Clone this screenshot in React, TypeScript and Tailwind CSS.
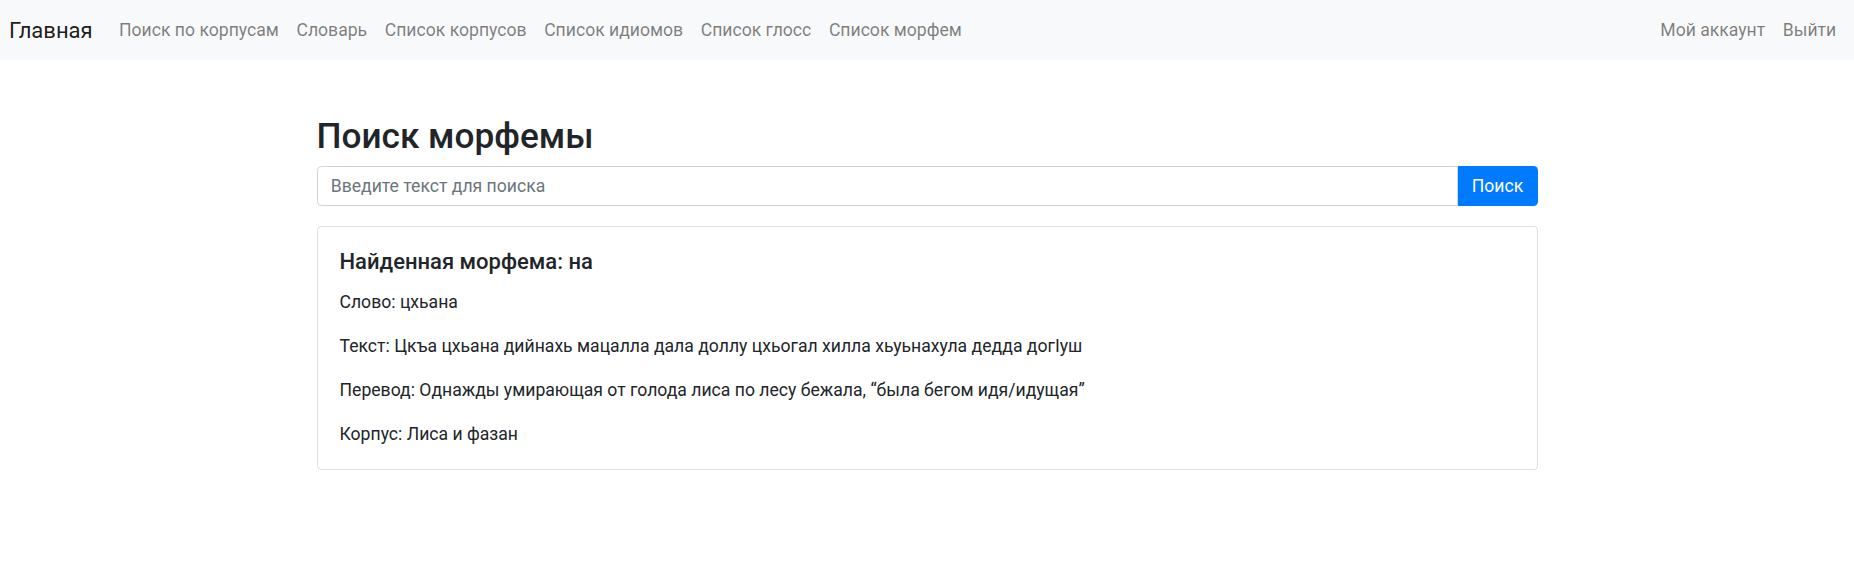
import React, { useState } from 'react';

const links = [
  'Поиск по корпусам',
  'Словарь',
  'Список корпусов',
  'Список идиомов',
  'Список глосс',
  'Список морфем',
];

const result = {
  morpheme: 'на',
  word: 'цхьана',
  text: 'Цкъа цхьана дийнахь мацалла дала доллу цхьогал хилла хьуьнахула дедда догIуш',
  translation: 'Однажды умирающая от голода лиса по лесу бежала, “была бегом идя/идущая”',
  corpus: 'Лиса и фазан',
};

const App = () => {
  const [query, setQuery] = useState('');

  return (
    <div
      className="min-h-screen bg-white text-[#212529] text-[17.6px] leading-[1.5]"
      style={{ fontFamily: 'Roboto, "Liberation Sans", Arial, sans-serif' }}
    >
      <nav className="h-[60px] bg-[#f8f9fa] px-[9px] flex items-center">
        <a href="#" className="text-[22px] leading-[1.5] text-black/90 mr-[17.6px]">
          Главная
        </a>
        <ul className="flex items-center">
          {links.map((link) => (
            <li key={link}>
              <a href="#" className="block px-[8.8px] py-[8.8px] text-black/50 hover:text-black/70">
                {link}
              </a>
            </li>
          ))}
        </ul>
        <ul className="flex items-center ml-auto">
          <li>
            <a href="#" className="block px-[8.8px] py-[8.8px] text-black/50 hover:text-black/70">
              Мой аккаунт
            </a>
          </li>
          <li>
            <a href="#" className="block px-[8.8px] py-[8.8px] text-black/50 hover:text-black/70">
              Выйти
            </a>
          </li>
        </ul>
      </nav>

      <main className="w-[1221px] mx-auto pt-[55px]">
        <h2 className="text-[35.2px] leading-[1.2] font-medium mb-[8.8px]">Поиск морфемы</h2>

        <form className="flex" onSubmit={(e) => e.preventDefault()}>
          <input
            value={query}
            onChange={(e) => setQuery(e.target.value)}
            placeholder="Введите текст для поиска"
            className="flex-1 h-[40px] border border-[#ced4da] rounded-l-[4.4px] px-[13.2px] text-[17.6px] text-[#495057] placeholder:text-[#6c757d] outline-none"
          />
          <button
            type="submit"
            className="w-[80px] h-[40px] bg-[#007bff] text-white rounded-r-[4.4px] text-[17.6px]"
          >
            Поиск
          </button>
        </form>

        <div className="mt-[20px] border border-black/[0.125] rounded-[4.4px] p-[22px]">
          <h5 className="text-[22px] leading-[1.2] font-medium mb-[13.2px]">
            Найденная морфема: {result.morpheme}
          </h5>
          <p className="mb-[17.6px]">Слово: {result.word}</p>
          <p className="mb-[17.6px]">Текст: {result.text}</p>
          <p className="mb-[17.6px]">Перевод: {result.translation}</p>
          <p>Корпус: {result.corpus}</p>
        </div>
      </main>
    </div>
  );
};

export default App;
